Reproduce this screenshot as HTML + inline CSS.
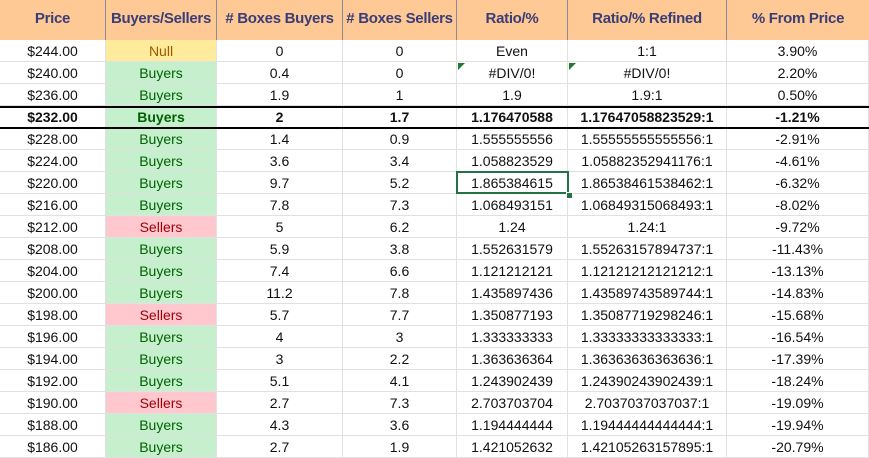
<!DOCTYPE html><html><head><style>
body{margin:0;width:869px;height:454px;overflow:hidden;background:#fff;font-family:"Liberation Sans",sans-serif;}
.r{position:absolute;left:0;width:869px;height:22px;}
.c{position:absolute;top:0;height:22px;line-height:22px;text-align:center;font-size:14px;color:#111;box-sizing:border-box;border-right:1px solid #e1e1e1;border-bottom:1px solid #e1e1e1;}
.h{position:absolute;top:0;left:0;width:869px;height:40px;background:#ffc995;}
.h div{position:absolute;top:0;height:40px;line-height:38px;text-align:center;font-weight:bold;font-size:15px;color:#3a3d78;border-right:1px solid #8a8a9a;box-sizing:border-box;letter-spacing:-0.3px;}
.N{background:#ffeb9c;color:#9c5700!important}.B{background:#c6efce;color:#006100!important}.S{background:#ffc7ce;color:#9c0006!important}
.bold .c{font-weight:bold}
.tri{position:absolute;left:1px;top:1px;width:0;height:0;border-top:7px solid #1e7a34;border-right:7px solid transparent;}
</style></head><body>
<div class="h"><div style="left:0;width:106px">Price</div><div style="left:106px;width:111px">Buyers/Sellers</div><div style="left:217px;width:126px"># Boxes Buyers</div><div style="left:343px;width:114px"># Boxes Sellers</div><div style="left:457px;width:111px">Ratio/%</div><div style="left:568px;width:159px">Ratio/% Refined</div><div style="left:727px;width:142px;border:none">% From Price</div></div>
<div id="rows"></div>
<script>
var d=[["$244.00","Null","0","0","Even","1:1","3.90%"],["$240.00","Buyers","0.4","0","#DIV/0!","#DIV/0!","2.20%"],["$236.00","Buyers","1.9","1","1.9","1.9:1","0.50%"],["$232.00","Buyers","2","1.7","1.176470588","1.17647058823529:1","-1.21%"],["$228.00","Buyers","1.4","0.9","1.555555556","1.55555555555556:1","-2.91%"],["$224.00","Buyers","3.6","3.4","1.058823529","1.05882352941176:1","-4.61%"],["$220.00","Buyers","9.7","5.2","1.865384615","1.86538461538462:1","-6.32%"],["$216.00","Buyers","7.8","7.3","1.068493151","1.06849315068493:1","-8.02%"],["$212.00","Sellers","5","6.2","1.24","1.24:1","-9.72%"],["$208.00","Buyers","5.9","3.8","1.552631579","1.55263157894737:1","-11.43%"],["$204.00","Buyers","7.4","6.6","1.121212121","1.12121212121212:1","-13.13%"],["$200.00","Buyers","11.2","7.8","1.435897436","1.43589743589744:1","-14.83%"],["$198.00","Sellers","5.7","7.7","1.350877193","1.35087719298246:1","-15.68%"],["$196.00","Buyers","4","3","1.333333333","1.33333333333333:1","-16.54%"],["$194.00","Buyers","3","2.2","1.363636364","1.36363636363636:1","-17.39%"],["$192.00","Buyers","5.1","4.1","1.243902439","1.24390243902439:1","-18.24%"],["$190.00","Sellers","2.7","7.3","2.703703704","2.7037037037037:1","-19.09%"],["$188.00","Buyers","4.3","3.6","1.194444444","1.19444444444444:1","-19.94%"],["$186.00","Buyers","2.7","1.9","1.421052632","1.42105263157895:1","-20.79%"]];
var L=[0,106,217,343,457,568,727,869],h="";
d.forEach(function(r,i){h+='<div class="r'+(i==3?' bold':'')+'" style="top:'+(40+i*22)+'px">';
for(var j=0;j<7;j++){var cls=j==1?(r[1]=="Null"?"N":r[1]=="Buyers"?"B":"S"):"";
h+='<div class="c '+cls+'" style="left:'+L[j]+'px;width:'+(L[j+1]-L[j])+'px">'+(i==1&&(j==4||j==5)?'<span class="tri"></span>':'')+r[j]+'</div>';}
h+='</div>';});
h+='<div style="position:absolute;left:0;top:106px;width:869px;height:2px;background:#000"></div><div style="position:absolute;left:0;top:127px;width:869px;height:2px;background:#000"></div>';
h+='<div style="position:absolute;left:456px;top:171px;width:113px;height:23px;border:2px solid #217346;box-sizing:border-box"></div><div style="position:absolute;left:566px;top:192px;width:5px;height:5px;background:#217346;border:1px solid #fff"></div>';
document.getElementById("rows").innerHTML=h;
</script></body></html>
